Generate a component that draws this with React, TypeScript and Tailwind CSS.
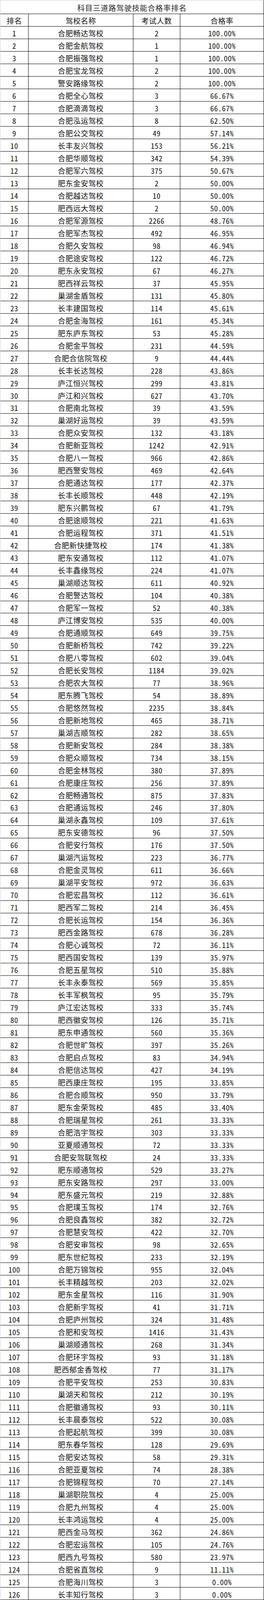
const raw = `合肥畅达驾校|2|100.00%
合肥金航驾校|1|100.00%
合肥振强驾校|1|100.00%
合肥宝龙驾校|2|100.00%
警安路缘驾校|2|100.00%
合肥全心驾校|3|66.67%
合肥滴滴驾校|3|66.67%
合肥泓运驾校|8|62.50%
合肥公交驾校|49|57.14%
长丰友兴驾校|153|56.21%
合肥华顺驾校|342|54.39%
合肥军六驾校|375|50.67%
肥东金安驾校|2|50.00%
合肥越达驾校|10|50.00%
肥西远大驾校|2|50.00%
合肥军源驾校|2266|48.76%
合肥军杰驾校|492|46.95%
合肥久安驾校|98|46.94%
合肥途安驾校|122|46.72%
肥东永安驾校|67|46.27%
肥西祥云驾校|37|45.95%
巢湖金盾驾校|131|45.80%
长丰建国驾校|114|45.61%
合肥金海驾校|161|45.34%
肥东庐东驾校|53|45.28%
合肥金平驾校|231|44.59%
合肥合信院驾校|9|44.44%
长丰长达驾校|228|43.86%
庐江恒兴驾校|299|43.81%
庐江和兴驾校|627|43.70%
合肥南北驾校|39|43.59%
巢湖好运驾校|39|43.59%
合肥众安驾校|132|43.18%
合肥新亚驾校|1242|42.91%
合肥八一驾校|966|42.86%
肥西警安驾校|469|42.64%
合肥通达驾校|177|42.37%
长丰长顺驾校|448|42.19%
肥东兴鹏驾校|67|41.79%
合肥途顺驾校|221|41.63%
合肥运程驾校|371|41.51%
合肥新快捷驾校|174|41.38%
肥东安通驾校|112|41.07%
长丰鑫缘驾校|224|41.07%
巢湖顺达驾校|611|40.92%
合肥警达驾校|104|40.38%
合肥军一驾校|52|40.38%
庐江博安驾校|535|40.00%
合肥通顺驾校|649|39.75%
合肥新桥驾校|742|39.22%
合肥八零驾校|602|39.04%
合肥长安驾校|1184|39.02%
合肥农大驾校|77|38.96%
肥东腾飞驾校|54|38.89%
合肥悠然驾校|2235|38.84%
合肥新地驾校|465|38.71%
巢湖吉顺驾校|282|38.65%
合肥新安驾校|284|38.38%
合肥众顺驾校|734|38.15%
合肥金林驾校|380|37.89%
合肥康庄驾校|256|37.89%
合肥畅通驾校|875|37.83%
合肥通运驾校|246|37.80%
巢湖永鑫驾校|109|37.61%
肥东安德驾校|96|37.50%
合肥安行驾校|176|37.50%
巢湖汽运驾校|223|36.77%
合肥金灵驾校|611|36.66%
巢湖平安驾校|972|36.63%
合肥宏昌驾校|112|36.61%
肥西军二驾校|214|36.45%
合肥长运驾校|154|36.36%
肥西金路驾校|678|36.28%
合肥心诚驾校|72|36.11%
肥西国安驾校|139|35.97%
合肥五星驾校|510|35.88%
长丰永泰驾校|569|35.85%
长丰军枫驾校|95|35.79%
庐江宏达驾校|333|35.74%
肥西徽安驾校|126|35.71%
肥东申通驾校|560|35.36%
合肥世旷驾校|397|35.26%
合肥启点驾校|83|34.94%
合肥信达驾校|427|34.19%
肥西康庄驾校|195|33.85%
合肥合顺驾校|950|33.79%
肥东金荣驾校|485|33.40%
合肥瑞星驾校|261|33.33%
合肥浩宇驾校|303|33.33%
亚夏顺通驾校|72|33.33%
合肥安驾联驾校|24|33.33%
肥东顺通驾校|529|33.27%
肥东安路驾校|297|33.00%
肥东盛元驾校|219|32.88%
合肥璞玉驾校|174|32.76%
合肥良鑫驾校|382|32.72%
合肥慧安驾校|422|32.70%
合肥安审驾校|98|32.65%
肥东世纪驾校|233|32.19%
合肥万锦驾校|955|32.04%
长丰精越驾校|203|32.02%
肥东金星驾校|116|31.90%
合肥新宇驾校|41|31.71%
合肥庐州驾校|324|31.48%
合肥和安驾校|1416|31.43%
巢湖顺通驾校|268|31.34%
合肥环宇驾校|93|31.18%
肥西郁金香驾校|77|31.17%
合肥平安驾校|253|30.83%
巢湖天和驾校|212|30.19%
合肥徽通驾校|93|30.11%
长丰晨泰驾校|522|30.08%
合肥起航驾校|399|30.08%
肥东春华驾校|128|29.69%
合肥安达驾校|58|29.31%
合肥亚夏驾校|74|28.38%
合肥锦程驾校|70|27.14%
巢湖职院驾校|4|25.00%
合肥九州驾校|4|25.00%
长丰鸿运驾校|4|25.00%
肥西金马驾校|362|24.86%
合肥宏运驾校|105|24.76%
肥西九号驾校|580|23.97%
合肥省直驾校|9|11.11%
合肥海川驾校|3|0.00%
长丰知行驾校|3|0.00%`;

const rows = raw.split("\n").map((line, i) => {
  const [name, count, rate] = line.split("|");
  return { rank: String(i + 1), name, count, rate };
});

// each row takes an equal share of the table height
function Row({ cells }: { cells: string[] }) {
  return (
    <div className="box-border flex-1 basis-0 min-h-0 grid grid-cols-[72px_268px_120px_214px] overflow-hidden border-b border-black">
      {cells.map((c, i) => (
        <div
          key={i}
          className="box-border flex items-center justify-center pt-[3px] border-r border-black whitespace-nowrap"
        >
          {c}
        </div>
      ))}
    </div>
  );
}

export default function App() {
  return (
    <div
      className="box-border w-[675px] h-screen max-h-[4225px] flex flex-col bg-white text-[#111] text-[19px] tracking-[0.5px] leading-none border-t border-l border-[#cfcfcf] [font-feature-settings:'hwid'] [-webkit-font-smoothing:antialiased]"
      style={{ fontFamily: '"Noto Sans CJK SC", "Noto Sans", sans-serif' }}
    >
      <div className="box-border flex-1 basis-0 min-h-0 flex items-center justify-center pt-[3px] border-b border-r border-black text-[#222] tracking-[1px]">
        科目三道路驾驶技能合格率排名
      </div>
      <Row cells={["排名", "驾校名称", "考试人数", "合格率"]} />
      {rows.map((r) => (
        <Row key={r.rank} cells={[r.rank, r.name, r.count, r.rate]} />
      ))}
    </div>
  );
}
